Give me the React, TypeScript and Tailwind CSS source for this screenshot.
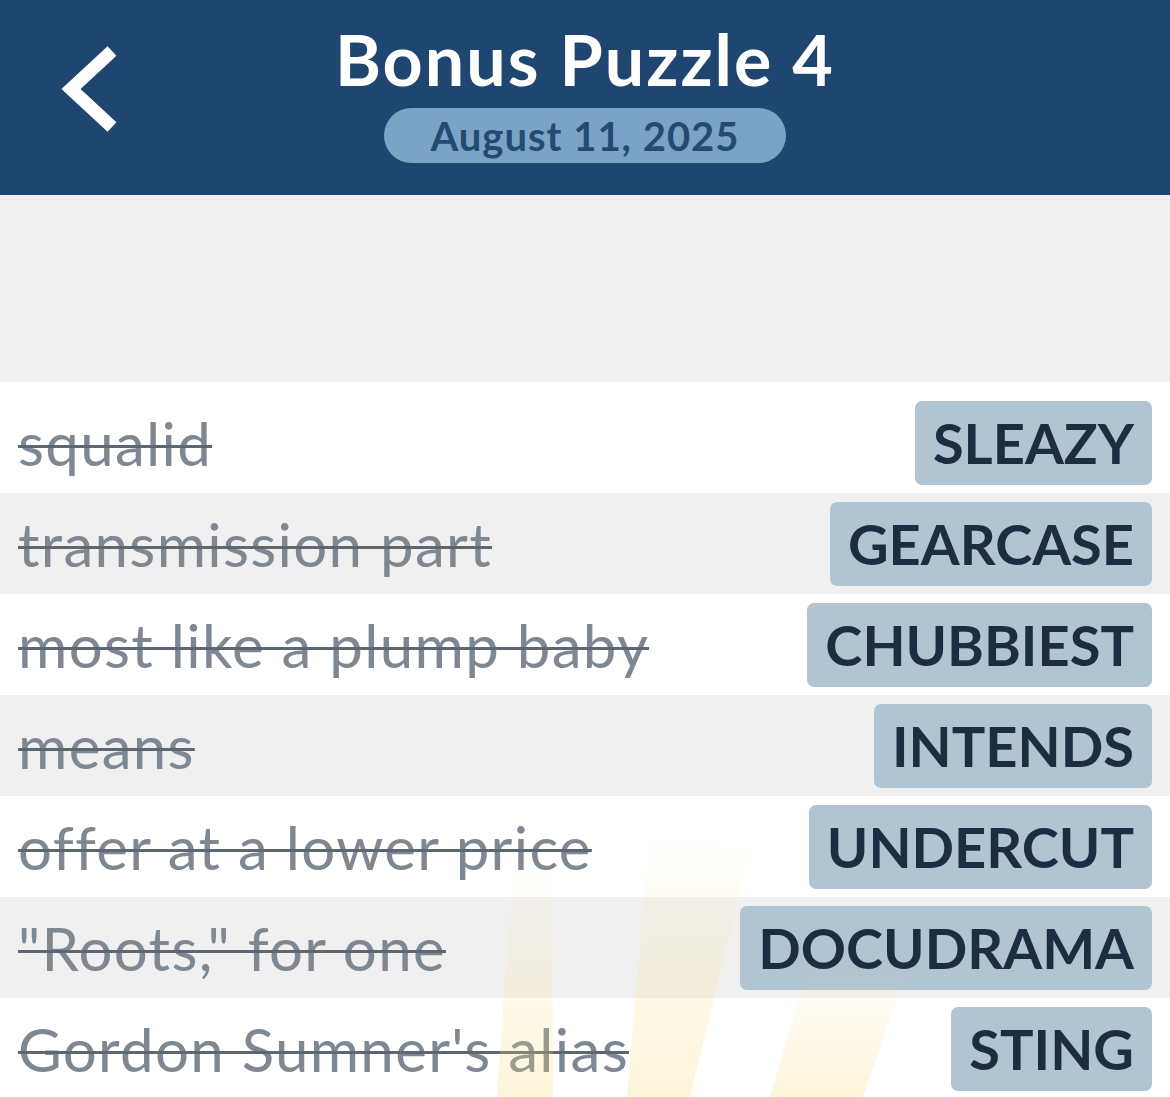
import React from "react";

const rows: [string, string][] = [
  ["squalid", "SLEAZY"],
  ["transmission part", "GEARCASE"],
  ["most like a plump baby", "CHUBBIEST"],
  ["means", "INTENDS"],
  ["offer at a lower price", "UNDERCUT"],
  ['"Roots," for one', "DOCUDRAMA"],
  ["Gordon Sumner's alias", "STING"],
];

export default function App() {
  return (
    <div
      className="relative w-[1170px] h-[1097px] overflow-hidden bg-[#f0f0f0]"
      style={{ fontFamily: "Lato, 'Noto Sans', sans-serif" }}
    >
      <header className="h-[195px] bg-[#1e4670] grid grid-cols-[1fr_auto_1fr]">
        <div className="flex items-start">
          <svg width="130" height="180" viewBox="0 0 130 180" className="block">
            <polyline
              points="112,51 71,89 112,127"
              fill="none"
              stroke="#ffffff"
              strokeWidth="13"
              strokeLinejoin="miter"
              strokeLinecap="butt"
            />
          </svg>
        </div>
        <div className="flex flex-col items-center pt-[21px]">
          <h1 className="text-white font-bold text-[70px] leading-[76px] tracking-[2px]">
            Bonus Puzzle 4
          </h1>
          <div className="mt-[11px] w-[402px] h-[55px] rounded-full bg-[#7ba3c5] flex items-center justify-center">
            <span className="text-[#244a71] font-bold text-[40px] leading-none tracking-[1px]">
              August 11, 2025
            </span>
          </div>
        </div>
        <div />
      </header>

      <div className="h-[187px]" />

      <div className="flex flex-col">
        {rows.map(([clue, ans], i) => (
          <div
            key={i}
            className={`flex items-center justify-between pl-[18px] pr-[18px] pb-[8px] ${
              i === 0 ? "pt-[19px] h-[111px]" : "pt-[9px] h-[101px]"
            } ${i % 2 === 0 ? "bg-white" : "bg-[#f0f0f0]"}`}
          >
            <span className="text-[#7e8893] text-[60px] leading-none tracking-[1.3px] line-through decoration-[#5d6772] decoration-[2.5px] whitespace-nowrap">
              {clue}
            </span>
            <span className="h-[84px] px-[18px] rounded-[7px] bg-[#b0c4d2] text-[#1b2d40] font-bold text-[56px] leading-none flex items-center">
              {ans}
            </span>
          </div>
        ))}
      </div>

      <svg
        className="absolute left-0 top-0 pointer-events-none"
        width="1170"
        height="1097"
        viewBox="0 0 1170 1097"
      >
        <defs>
          <linearGradient id="rayA" x1="0" y1="0" x2="0" y2="1">
            <stop offset="0" stopColor="#f9dc7a" stopOpacity="0" />
            <stop offset="0.5" stopColor="#f9dc7a" stopOpacity="0.14" />
            <stop offset="1" stopColor="#f9dc7a" stopOpacity="0.28" />
          </linearGradient>
        </defs>
        <polygon points="513,860 552,860 553,1097 497,1097" fill="url(#rayA)" />
        <polygon points="650,825 750,850 690,1097 627,1097" fill="url(#rayA)" />
        <polygon points="810,960 905,975 863,1097 770,1097" fill="url(#rayA)" />
      </svg>
    </div>
  );
}
